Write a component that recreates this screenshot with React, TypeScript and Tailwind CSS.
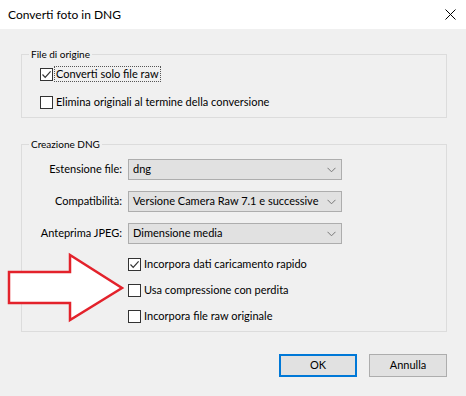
import React from 'react';

const font = { fontFamily: 'Lato, "Noto Sans", sans-serif' };

function Box({ checked }: { checked?: boolean }) {
  return (
    <span className="w-[13px] h-[13px] border border-[#333333] bg-white shrink-0 flex items-center justify-center">
      {checked && (
        <svg width="11" height="11" viewBox="0 0 11 11">
          <path d="M1.5 5.5 L4.2 8.3 L9.6 2.4" fill="none" stroke="#333" strokeWidth="1.2" />
        </svg>
      )}
    </span>
  );
}

function Check({ label, checked, focus }: { label: string; checked?: boolean; focus?: boolean }) {
  return (
    <div className="flex items-center h-[14px] gap-[2px]">
      <Box checked={checked} />
      <span
        className={`text-[11px] leading-[14px] text-black whitespace-nowrap px-[1px] ${
          focus ? 'outline outline-1 outline-dotted outline-[#555]' : ''
        }`}
      >
        {label}
      </span>
    </div>
  );
}

function Select({ label, value }: { label: string; value: string }) {
  return (
    <div className="flex items-center">
      <div className="w-[101px] text-right text-[11px] text-black pr-[1px]">{label}</div>
      <div className="ml-[5px] w-[214px] h-[21px] border border-[#adadad] bg-[#e1e1e1] flex items-center justify-between pl-[4px] pr-[5px]">
        <span className="text-[11px] text-black whitespace-nowrap">{value}</span>
        <svg width="9" height="6" viewBox="0 0 9 6">
          <path d="M0.5 0.8 L4.5 4.8 L8.5 0.8" fill="none" stroke="#777" strokeWidth="1" />
        </svg>
      </div>
    </div>
  );
}

function Group({ title, children, className }: { title: string; children: React.ReactNode; className?: string }) {
  return (
    <div className={`relative border border-[#dcdcdc] ${className ?? ''}`}>
      <span className="absolute left-[7px] -top-[8px] px-[2px] bg-[#f0f0f0] text-[10px] leading-[14px] text-black">
        {title}
      </span>
      {children}
    </div>
  );
}

export default function App() {
  return (
    <div className="relative w-[466px] h-[396px] bg-[#f0f0f0] overflow-hidden" style={font}>
      {/* barra del titolo */}
      <div className="h-[29px] bg-white flex items-center justify-between pl-[8px] pr-[10px]">
        <span className="text-[12px] text-black">Converti foto in DNG</span>
        <svg width="11" height="11" viewBox="0 0 11 11">
          <path d="M0.5 0.5 L10.5 10.5 M10.5 0.5 L0.5 10.5" stroke="#000" strokeWidth="1" />
        </svg>
      </div>

      <div className="px-[19px]">
        <Group title="File di origine" className="mt-[25px] h-[64px] ml-[2px]">
          <div className="flex flex-col gap-[14px] pt-[12px] pl-[18px]">
            <Check label="Converti solo file raw" checked focus />
            <Check label="Elimina originali al termine della conversione" />
          </div>
        </Group>

        <Group title="Creazione DNG" className="mt-[26px] h-[188px] ml-[2px]">
          <div className="flex flex-col pt-[14px]">
            <div className="flex flex-col gap-[11px]">
              <Select label="Estensione file:" value="dng" />
              <Select label="Compatibilità:" value="Versione Camera Raw 7.1 e successive" />
              <Select label="Anteprima JPEG:" value="Dimensione media" />
            </div>
            <div className="flex flex-col gap-[12px] mt-[13px] pl-[106px]">
              <Check label="Incorpora dati caricamento rapido" checked />
              <Check label="Usa compressione con perdita" />
              <Check label="Incorpora file raw originale" />
            </div>
          </div>
        </Group>

        <div className="flex justify-end gap-[12px] mt-[22px] pr-[0px]">
          <button className="w-[78px] h-[23px] border-2 border-[#0078d7] bg-[#e1e1e1] text-[11px] text-black">
            OK
          </button>
          <button className="w-[78px] h-[23px] border border-[#adadad] bg-[#e1e1e1] text-[11px] text-black">
            Annulla
          </button>
        </div>
      </div>

      {/* freccia */}
      <svg className="absolute left-0 top-0" width="466" height="396" viewBox="0 0 466 396">
        <polygon
          points="9,272 70,272 70,255 122,288 70,320 70,303 9,303"
          fill="#fff"
          stroke="#e3222b"
          strokeWidth="2.5"
          strokeLinejoin="miter"
        />
      </svg>
    </div>
  );
}
